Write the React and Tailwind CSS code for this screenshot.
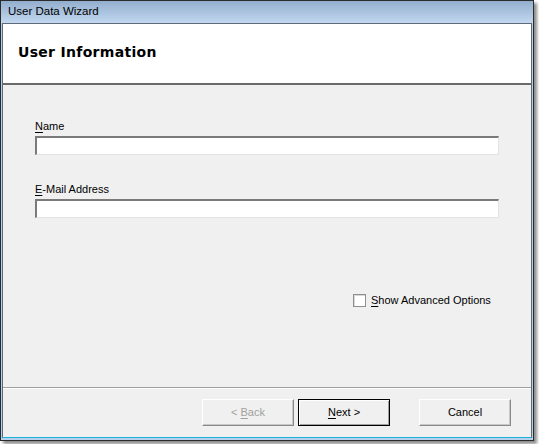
import React, { useState } from "react";

const ui = { fontFamily: '"Liberation Sans", Arial, sans-serif' };

const Mnemonic = ({ k, rest }) => (
  <>
    <span className="underline underline-offset-2">{k}</span>
    {rest}
  </>
);

const Field = ({ label, value, onChange }) => (
  <div className="flex flex-col">
    <label className="text-[11px] leading-[14px] text-black mb-[3px]">{label}</label>
    <input
      value={value}
      onChange={onChange}
      className="h-[19px] w-[464px] bg-white outline-none border-t-2 border-l-2 border-b border-r border-t-[#7a7a7a] border-l-[#7a7a7a] border-b-[#e3e3e3] border-r-[#e3e3e3] text-[11px] px-1"
    />
  </div>
);

const WizardButton = ({ children, disabled, isDefault }) => (
  <button
    disabled={disabled}
    className={
      "h-[27px] w-[92px] text-[11px] bg-[#f0f0f0] flex items-center justify-center " +
      (isDefault
        ? "border border-black shadow-[inset_1px_1px_0_#fff,inset_-1px_-1px_0_#a0a0a0]"
        : "border border-t-white border-l-white border-b-[#8a8a8a] border-r-[#8a8a8a] shadow-[inset_-1px_-1px_0_#c8c8c8]") +
      (disabled ? " text-[#a0a0a0]" : " text-black")
    }
  >
    {children}
  </button>
);

export default function App() {
  const [name, setName] = useState("");
  const [email, setEmail] = useState("");
  const [advanced, setAdvanced] = useState(false);

  return (
    <div className="w-[539px] h-[444px] bg-white" style={ui}>
      <div className="w-[534px] h-[441px] border border-[#2b2b2b] bg-[#b6d0ec] shadow-[3px_3px_3px_rgba(0,0,0,0.45)] flex flex-col">
        {/* caption */}
        <div className="h-[22px] shrink-0 bg-gradient-to-b from-[#93aecd] to-[#c2d8f0] flex items-center pl-[7px] text-[11.5px] text-black">
          User Data Wizard
        </div>

        {/* client area */}
        <div className="flex-1 flex flex-col mx-[1px] mb-[2px] border border-[#5e6a78] bg-[#f0f0f0] border-b-[#1ab0d8]">
          <div className="h-[61px] shrink-0 bg-white border-b-2 border-b-[#6a6a6a] flex items-center pl-[15px] pb-[3px]">
            <h1 className="text-[14px] font-bold text-black tracking-[0.3px]" style={{ fontFamily: '"DejaVu Sans", sans-serif' }}>
              User Information
            </h1>
          </div>

          <div className="flex-1 flex flex-col pl-[32px] pt-[34px]">
            <Field label={<Mnemonic k="N" rest="ame" />} value={name} onChange={(e) => setName(e.target.value)} />
            <div className="h-[27px]" />
            <Field label={<Mnemonic k="E" rest="-Mail Address" />} value={email} onChange={(e) => setEmail(e.target.value)} />

            <label className="flex items-center gap-[5px] ml-[318px] mt-[74px] text-[11px] text-black">
              <span
                onClick={() => setAdvanced(!advanced)}
                className="w-[13px] h-[13px] bg-white border border-[#8f8f8f] shadow-[inset_1px_1px_0_#d8d8d8] flex items-center justify-center text-[10px] leading-none"
              >
                {advanced ? "✓" : ""}
              </span>
              <span>
                <Mnemonic k="S" rest="how Advanced Options" />
              </span>
            </label>
          </div>

          <div className="h-[2px] shrink-0 border-t border-t-[#a0a0a0] border-b border-b-white" />

          <div className="h-[48px] shrink-0 flex items-start pt-[10px] pl-[199px] gap-[4px]">
            <WizardButton disabled>
              &lt;&nbsp;<Mnemonic k="B" rest="ack" />
            </WizardButton>
            <WizardButton isDefault>
              <Mnemonic k="N" rest="ext" />&nbsp;&gt;
            </WizardButton>
            <div className="w-[21px]" />
            <WizardButton>Cancel</WizardButton>
          </div>
        </div>
      </div>
    </div>
  );
}
